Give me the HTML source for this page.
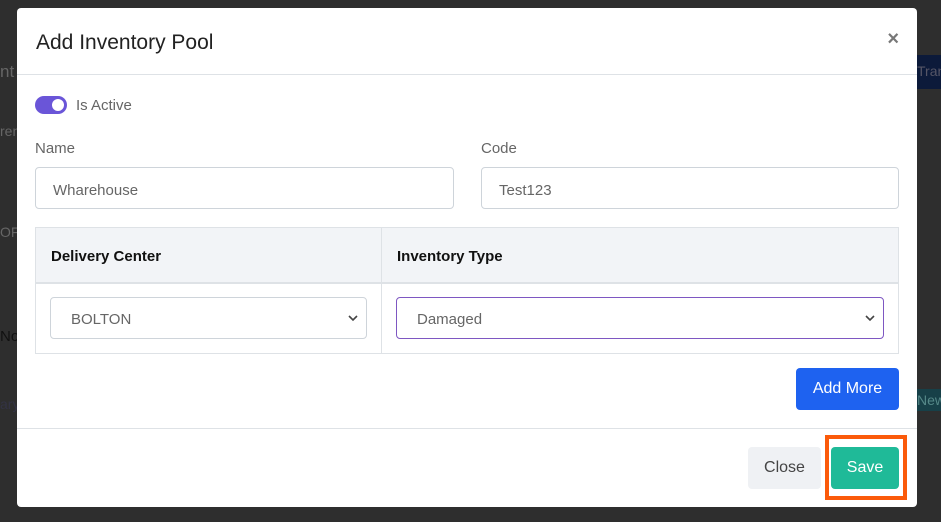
<!DOCTYPE html>
<html><head><meta charset="utf-8"><style>
*{box-sizing:border-box;margin:0;padding:0}
body{width:941px;height:522px;background:#2e2e2e;font-family:"Liberation Sans",sans-serif;position:relative;overflow:hidden}
.bg{position:absolute;color:#222;font-size:17px}
.modal{position:absolute;left:17px;top:8px;width:900px;height:499px;background:#fff;border-radius:4px}
.hdr{height:67px;border-bottom:1px solid #dee2e6;position:relative}
.hdr h1{position:absolute;left:19px;top:23px;font-size:21px;font-weight:normal;color:#222}
.x{position:absolute;right:18px;top:20px;font-size:20px;color:#777;font-weight:bold}
.lbl{position:absolute;font-size:15px;color:#666}
.inp{position:absolute;height:42px;border:1px solid #ced4da;border-radius:4px;font-size:15px;color:#666;padding:14px 17px 0}
.tog{position:absolute;left:18px;top:88px;width:32px;height:18px;border-radius:9px;background:#6a55d8}
.tog:after{content:"";position:absolute;right:3px;top:3px;width:12px;height:12px;border-radius:50%;background:#fff}
table{position:absolute;left:18px;top:219px;width:864px;border-collapse:collapse}
th,td{border:1px solid #dee2e6;text-align:left}
th{background:#f2f4f7;height:55px;font-size:15px;color:#111;padding:4px 0 0 15px;font-weight:bold;border-bottom:2px solid #dee2e6}
td{height:71px;padding:0 14px}
.sel{height:42px;border:1px solid #ced4da;border-radius:4px;font-size:15px;color:#666;padding:13px 20px 0;position:relative}
.sel svg{position:absolute;right:8px;top:17px}
.btn{position:absolute;border-radius:4px;font-size:16px;text-align:center}
</style></head><body>
<div class="bg" style="left:0;top:62px;color:#666">nt</div>
<div class="bg" style="left:917px;top:55px;width:24px;height:34px;background:#0c1a3a;color:#556;font-size:14px;padding-top:8px">Tran</div>
<div class="bg" style="left:0;top:123px;font-size:14px;color:#666">ren</div>
<div class="bg" style="left:0;top:224px;font-size:14px;color:#666">OFF</div>
<div class="bg" style="left:0;top:328px;font-size:15px;color:#111">No</div>
<div class="bg" style="left:0;top:396px;font-size:14px;color:#334">ary</div>
<div class="bg" style="left:917px;top:389px;width:24px;height:22px;background:#174048;color:#588;font-size:14px;padding-top:3px">New</div>
<div class="modal">
 <div class="hdr"><h1>Add Inventory Pool</h1><div class="x">×</div></div>
 <div class="tog"></div>
 <div class="lbl" style="left:59px;top:89px">Is Active</div>
 <div class="lbl" style="left:18px;top:132px">Name</div>
 <div class="lbl" style="left:464px;top:132px">Code</div>
 <div class="inp" style="left:18px;top:159px;width:419px">Wharehouse</div>
 <div class="inp" style="left:464px;top:159px;width:418px">Test123</div>
 <table><tr><th style="width:346px">Delivery Center</th><th>Inventory Type</th></tr>
 <tr><td><div class="sel">BOLTON<svg width="10" height="7" viewBox="0 0 10 7"><path d="M1 1l4 4 4-4" fill="none" stroke="#444" stroke-width="1.6"/></svg></div></td>
 <td><div class="sel" style="border-color:#7e57c2">Damaged<svg width="10" height="7" viewBox="0 0 10 7"><path d="M1 1l4 4 4-4" fill="none" stroke="#444" stroke-width="1.6"/></svg></div></td></tr></table>
 <div class="btn" style="left:779px;top:360px;width:103px;height:42px;background:#1e62f0;color:#fff;padding-top:12px">Add More</div>
 <div style="position:absolute;left:0;top:420px;width:900px;border-top:1px solid #dee2e6"></div>
 <div class="btn" style="left:731px;top:439px;width:73px;height:42px;background:#eff1f4;color:#444;padding-top:12px">Close</div>
 <div style="position:absolute;left:808px;top:427px;width:82px;height:65px;border:4px solid #fb5a0a"></div>
 <div class="btn" style="left:814px;top:439px;width:68px;height:42px;background:#1fba98;color:#fff;padding-top:12px">Save</div>
</div>
</body></html>
